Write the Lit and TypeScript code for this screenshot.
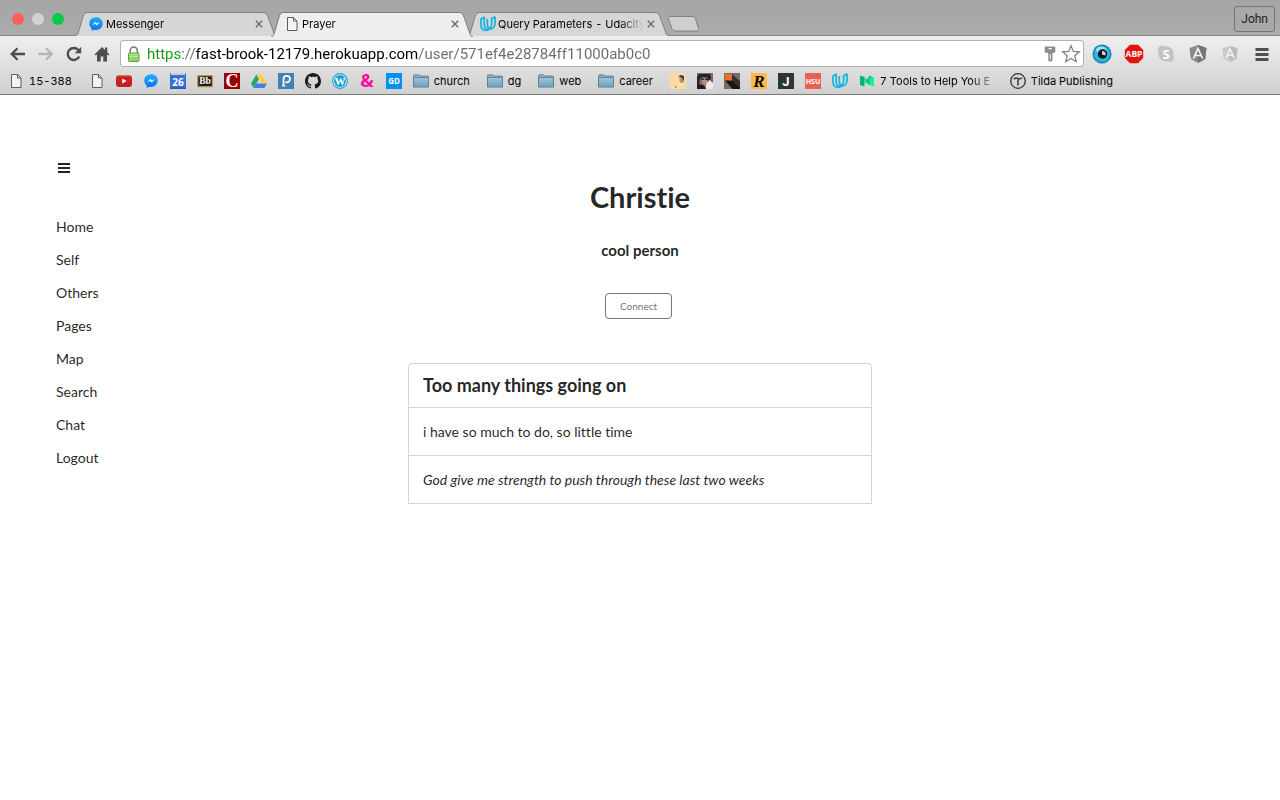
import { LitElement, html, css, svg, nothing } from "lit";
import type { TemplateResult } from "lit";
import { customElement, property, state } from "lit/decorators.js";
import { classMap } from "lit/directives/class-map.js";

const messenger = html`<svg class="glyph" viewBox="0 0 16 16" aria-hidden="true">
  <defs><linearGradient id="mg" x1="0" y1="0" x2="0" y2="1"><stop offset="0" stop-color="#1cb0ff" /><stop offset="1" stop-color="#0a6cff" /></linearGradient></defs>
  <path fill="url(#mg)" d="M8 1.2C4.1 1.2 1.3 4 1.3 7.5c0 2 .9 3.700 2.400 4.900V15l2.300-1.300c.6.2 1.300.2 2 .2 3.900 0 6.700-2.800 6.700-6.400S11.900 1.200 8 1.200z" />
  <path fill="#fff" d="M3.900 9.400 7.300 5.800l1.800 1.800 3.100-1.800-3.400 3.700-1.800-1.800z" />
</svg>`;

const page = html`<svg class="glyph" viewBox="0 0 16 16" aria-hidden="true">
  <path fill="#f4f4f4" stroke="#5c5c5c" d="M3.500 1.500h6l3.500 3.500v9.500H3.500z" />
  <path fill="none" stroke="#5c5c5c" d="M9.500 1.500V5H13" />
</svg>`;

const udacity = html`<svg class="glyph" viewBox="0 0 16 16" aria-hidden="true">
  <g fill="none" stroke="#12b4e0" stroke-width="1.700" stroke-linejoin="round">
    <path d="M4.200 1.300 1 2.900v6.200c0 3.300 2.100 5.300 5 5.300 1.200 0 2.100-.4 2.800-1-2.900-.3-4.600-2-4.600-5z" />
    <path d="M15 1 11.700 2.600V8c0 2-.8 3.600-2.900 5.400C13 13 15 10.500 15 7.500z" />
    <path d="M7.300 3v5.800c0 1.700.6 3 1.900 3.900" />
  </g>
</svg>`;

const youtube = html`<svg class="glyph" viewBox="0 0 16 16" aria-hidden="true">
  <rect y="2.500" width="16" height="11.500" rx="2.400" fill="#c9201f" /><path fill="#e04a48" d="M2 2.800h12v.8H2z" />
  <path fill="#fff" d="M6.200 5.600v5l4.400-2.500z" />
</svg>`;

const calendar = html`<svg class="glyph" viewBox="0 0 16 16" aria-hidden="true">
  <rect width="16" height="16" rx="1" fill="#3b6fd8" /><path fill="#c9cfdb" d="M1 0h14v2H1z" /><path fill="#2857b5" d="M0 14.500h16V16H0z" />
  <text x="8" y="12.500" class="g-sans" font-size="10" fill="#fff">26</text>
</svg>`;

const blackboard = html`<svg class="glyph" viewBox="0 0 16 16" aria-hidden="true">
  <rect x=".7" y="2.700" width="14.600" height="11" fill="#1b1b1b" stroke="#c99a35" stroke-width="1.200" />
  <text x="8" y="11.300" class="g-serif" font-size="9.500" fill="#fff">Bb</text>
</svg>`;

const redC = html`<svg class="glyph" viewBox="0 0 16 16" aria-hidden="true">
  <rect width="16" height="16" fill="#990000" /><text x="8" y="14" class="g-serif" font-size="18" fill="#fff">C</text>
</svg>`;

const drive = html`<svg class="glyph" viewBox="0 0 16 16" aria-hidden="true">
  <path fill="#24a566" d="M5.400 1.500 8 6 2.700 15 0 10.500z" />
  <path fill="#ffcf3f" d="M5.400 1.500h5.200L16 10.500h-5.300z" />
  <path fill="#3f7fee" d="M5.300 10.500H16L13.300 15H2.700z" />
</svg>`;

const pandora = html`<svg class="glyph" viewBox="0 0 16 16" aria-hidden="true">
  <rect width="16" height="16" fill="#4481b2" />
  <path fill="none" stroke="#fff" stroke-width="1.800" d="M5.500 13V6a3.300 3.300 0 0 1 3.300-3.200 3.100 3.100 0 0 1 0 6.500H7.300" />
  <path fill="none" stroke="#fff" d="M4 13h3.500" />
</svg>`;

const github = html`<svg class="glyph" viewBox="0 0 16 16" aria-hidden="true">
  <path fill="#1b1b1b" d="M8 0C3.580 0 0 3.580 0 8c0 3.540 2.290 6.530 5.470 7.590.4.070.55-.17.55-.38 0-.19-.01-.82-.01-1.490-2.010.37-2.530-.49-2.690-.94-.09-.23-.48-.94-.82-1.130-.28-.15-.68-.52-.01-.53.63-.01 1.080.58 1.230.82.72 1.210 1.870.87 2.330.66.070-.52.28-.87.51-1.070-1.780-.2-3.640-.89-3.640-3.950 0-.87.31-1.590.82-2.150-.08-.2-.36-1.020.08-2.120 0 0 .67-.21 2.200.82.64-.18 1.320-.27 2-.27s1.360.09 2 .27c1.530-1.040 2.200-.82 2.200-.82.44 1.100.16 1.920.08 2.120.51.56.82 1.270.82 2.150 0 3.070-1.870 3.750-3.650 3.950.29.25.54.73.54 1.480 0 1.070-.01 1.930-.01 2.200 0 .21.15.46.55.38A8.010 8.010 0 0 0 16 8c0-4.420-3.580-8-8-8z" />
</svg>`;

const wordpress = html`<svg class="glyph" viewBox="0 0 16 16" aria-hidden="true">
  <circle cx="8" cy="8" r="7.400" fill="#e9f6fb" stroke="#1ba1d1" stroke-width="1.100" />
  <circle cx="8" cy="8" r="6" fill="#1ba1d1" />
  <text x="8" y="12" class="g-serif" font-size="11" fill="#fff">W</text>
</svg>`;

const ampersand = html`<svg class="glyph" viewBox="0 0 16 16" aria-hidden="true">
  <text x="8" y="14" class="g-sans" font-size="18" fill="#f6109f">&amp;</text>
</svg>`;

const gd = html`<svg class="glyph" viewBox="0 0 16 16" aria-hidden="true">
  <rect width="16" height="16" fill="#0090f0" /><text x="8" y="10.800" class="g-sans" font-size="8" fill="#fff">GD</text>
</svg>`;

const folder = html`<svg class="glyph" viewBox="0 0 16 16" aria-hidden="true">
  <defs><linearGradient id="fg" x1="0" y1="0" x2="0" y2="1"><stop offset="0" stop-color="#a3c4d8" /><stop offset="1" stop-color="#6e9fbf" /></linearGradient></defs>
  <path fill="#8db2c8" stroke="#56798f" stroke-width=".8" d="M.5 3c0-.8.4-1.200 1.200-1.200h3.600c.7 0 1 .4 1.200 1.200h8c.7 0 1 .3 1 1V13.500H.5z" />
  <path fill="url(#fg)" stroke="#56798f" stroke-width=".8" d="M.5 4.500h15v9.600H.5z" />
</svg>`;

const avatarOne = html`<svg class="glyph" viewBox="0 0 16 16" aria-hidden="true">
  <rect width="16" height="16" fill="#fbdba1" /><path fill="#c98d68" d="M9.500 4h4v5l-2 1.500-2-2z" />
  <path fill="#3c2c48" d="M8.500 3.500c1.500-1.600 4.500-1.500 5.300 0 .6 1.600 0 4-.8 5 0-2-.5-3.500-1.300-4z" />
  <path fill="#e9ece9" d="m8.500 10 2 .6 2.500-.6.800 1.500-3.800.6z" /><path fill="#8b6248" d="m4.500 14 2-1 .5 1-1.500.8z" />
</svg>`;

const avatarTwo = html`<svg class="glyph" viewBox="0 0 16 16" aria-hidden="true">
  <rect width="16" height="16" fill="#776c64" /><path fill="#252326" d="M2 1h11l1 5-3 2-8-3-1 6-2 1V4z" />
  <path fill="#bd8d77" d="M4.500 4.500h6v5L8 12l-3-2z" /><path fill="#302c30" d="M4 5.500h3v1.500H4zM8 5.500h3v1.500H8z" />
  <path fill="#eceaf0" d="m9 11 3.500-4 3.500 3v6H9z" /><path fill="#1c1c22" d="m0 11 6 1 3 4H0z" />
</svg>`;

const block = html`<svg class="glyph" viewBox="0 0 16 16" aria-hidden="true">
  <rect width="16" height="16" fill="#6f7069" /><path fill="#171615" d="M1 7.500 7.500 1 16 8.500V16H8.500z" />
  <path fill="#353331" d="M8 1 16 9v6L8 7.500z" /><path fill="#f26a24" d="M1 1h7v6.500H1z" />
</svg>`;

const letterR = html`<svg class="glyph" viewBox="0 0 16 16" aria-hidden="true">
  <rect width="16" height="16" fill="#fdbb43" /><text x="8" y="13.500" class="g-serif g-italic" font-size="17" fill="#000">R</text>
</svg>`;

const letterJ = html`<svg class="glyph" viewBox="0 0 16 16" aria-hidden="true">
  <rect width="16" height="16" fill="#2b3537" /><text x="8" y="12.500" class="g-j" font-size="13" fill="#fff">J</text>
</svg>`;

const hsu = html`<svg class="glyph" viewBox="0 0 16 16" aria-hidden="true">
  <rect width="16" height="16" fill="#ea5f55" /><text x="8" y="10.500" class="g-sans" font-size="7" fill="#fff">HSU</text>
</svg>`;

const medium = html`<svg class="glyph" viewBox="0 0 16 16" aria-hidden="true">
  <path fill="#00b56b" d="M1 2.500 5.500 4v9.500L1 12z" /><path fill="#11e08a" d="M5.500 4 10.500 12 5.500 9z" />
  <path fill="#00c878" d="m5 3.800 5.500 9L15 5l-4.500-2.500-2.700 4.200z" /><path fill="#19f09a" d="M10.500 5 15 4.300V13.500l-4.500-1.500z" />
</svg>`;

const tilda = html`<svg class="glyph" viewBox="0 0 16 16" aria-hidden="true">
  <circle cx="8" cy="8" r="7.300" fill="none" stroke="#333" stroke-width="1.300" />
  <path fill="none" stroke="#333" stroke-width="1.400" d="M4 6.200c1.200-1.500 2.400-1.500 4-.8s2.800.5 4-.7M8 5.500V12.500" />
</svg>`;

interface Bookmark {
  icon: TemplateResult;
  title: string;
  label?: string;
  fade?: boolean;
}

const bookmarks: Bookmark[] = [
  { icon: page, title: "15-388", label: "15-388" },
  { icon: page, title: "Page" },
  { icon: youtube, title: "YouTube" },
  { icon: messenger, title: "Messenger" },
  { icon: calendar, title: "Calendar" },
  { icon: blackboard, title: "Blackboard" },
  { icon: redC, title: "Courses" },
  { icon: drive, title: "Drive" },
  { icon: pandora, title: "Pandora" },
  { icon: github, title: "GitHub" },
  { icon: wordpress, title: "WordPress" },
  { icon: ampersand, title: "Ampersand" },
  { icon: gd, title: "GD" },
  { icon: folder, title: "church", label: "church" },
  { icon: folder, title: "dg", label: "dg" },
  { icon: folder, title: "web", label: "web" },
  { icon: folder, title: "career", label: "career" },
  { icon: avatarOne, title: "Portrait" },
  { icon: avatarTwo, title: "Portfolio" },
  { icon: block, title: "Blocks" },
  { icon: letterR, title: "R" },
  { icon: letterJ, title: "J" },
  { icon: hsu, title: "HSU" },
  { icon: udacity, title: "Udacity" },
  { icon: medium, title: "7 Tools to Help You", label: "7 Tools to Help You E", fade: true },
  { icon: tilda, title: "Tilda Publishing", label: "Tilda Publishing" },
];

const shield = (fill: string, shade: string) => svg`
  <path fill=${fill} d="m10 1 8.500 3-1.300 11L10 19l-7.200-4L1.500 4z" />
  <path fill=${shade} d="m10 1 8.500 3-1.300 11L10 19z" />
  <path fill="none" stroke="#f4f4f4" stroke-width="1.700" d="M5.500 14.500 10 4.500l4.500 10M7.200 11.500h5.600" />`;

const extensions = [
  {
    title: "Eye",
    art: svg`<circle cx="10" cy="10" r="9.500" fill="#1783a8" /><circle cx="10" cy="10" r="8" fill="#2bb6dc" />
      <ellipse cx="9" cy="6" rx="5" ry="3.500" fill="#8fe3f5" /><circle cx="10.500" cy="10" r="4.700" fill="#101820" />
      <path fill="#d8d8d8" d="M10 7v3.500l3.500 1A3.500 3.500 0 0 0 10 7z" />`,
  },
  {
    title: "Adblock Plus",
    art: svg`<path fill="#e2150d" d="M6 .8h8L19.200 6v8L14 19.200H6L.8 14V6z" /><text x="10" y="13.200" class="g-sans" font-size="8.500" fill="#fff">ABP</text>`,
  },
  {
    title: "Skype",
    art: svg`<path fill="#c3c3c3" d="M6 1.500c1.300 0 2 .3 2.800.8C14 1.500 18 5.500 17.500 10.800c1.800 3-.2 7.200-3.700 7.200-1.200 0-2-.3-2.700-.8C6 18 1.800 14 2.500 8.800.8 5.500 2.600 1.500 6 1.500z" /><text x="10" y="14.500" class="g-sans" font-size="13" fill="#fff">S</text>`,
  },
  { title: "AngularJS", art: shield("#8b8b8b", "#757575") },
  { title: "Batarang", art: svg`<g transform="translate(1 1) scale(.9)">${shield("#cacaca", "#bcbcbc")}</g>` },
  { title: "Menu", art: svg`<path fill="#4d4d4d" d="M3.500 4h13v3h-13zM3.500 9h13v3h-13zM3.500 14h13v3h-13z" />` },
];

const iconStyles = css`
  .glyph { display: block; width: 16px; height: 16px; flex: none; overflow: visible; }
  .g-sans { font-family: "Open Sans", "Noto Sans", sans-serif; font-weight: 700; text-anchor: middle; }
  .g-serif { font-family: "Liberation Serif", serif; font-weight: 700; text-anchor: middle; }
  .g-j { font-family: Roboto, sans-serif; font-weight: 700; text-anchor: middle; }
  .g-italic { font-style: italic; }
`;

@customElement("browser-tab")
class BrowserTab extends LitElement {
  @property() label = "";
  @property({ attribute: false }) icon: unknown = nothing;
  @property({ type: Boolean, reflect: true }) active = false;

  static styles = [
    iconStyles,
    css`
      :host { display: grid; flex: 0 1 202px; height: 24px; margin-right: -6px; }
      :host([active]) { z-index: 1; height: 25px; }
      .shape, .content { grid-area: 1 / 1; min-width: 0; }
      .shape { display: block; width: 100%; height: 100%; }
      .content { display: flex; align-items: center; height: 24px; padding: 0 13px; }
      .title { flex: 1; margin: 0 2px; overflow: hidden; white-space: nowrap; font-size: 11px; line-height: 16px;
        mask-image: linear-gradient(to right, #000 calc(100% - 24px), transparent); }
      .close { display: grid; place-items: center; width: 10px; height: 10px; padding: 0; border: 0; background: none; }
    `,
  ];

  render() {
    return html`
      <svg class="shape" viewBox="0 0 202 25" preserveAspectRatio="none" aria-hidden="true">
        <path fill=${this.active ? "#efefef" : "#d6d6d6"} d="M0 25C3 24 3 22 4 19L8 5C9 2 10 .5 13 .5H188C191 .5 192 2 193 5L198 19C199 22 199 24 202 25z" />
        <path fill="none" stroke="#7d7d7d" d="M0 25C3 24 3 22 4 19L8 5C9 2 10 .5 13 .5H188C191 .5 192 2 193 5L198 19C199 22 199 24 202 25" />
      </svg>
      <div class="content">
        ${this.icon}
        <span class="title">${this.label}</span>
        <button class="close" aria-label="Close tab">
          <svg width="8" height="8" viewBox="0 0 8 8"><path stroke="#6b6b6b" stroke-width="1.400" d="m.8.800 6.400 6.400M7.200.800.800 7.200" /></svg>
        </button>
      </div>
    `;
  }
}

@customElement("browser-chrome")
class BrowserChrome extends LitElement {
  static styles = [
    iconStyles,
    css`
      :host { display: block; font-family: Inter, Roboto, sans-serif; font-variant-numeric: tabular-nums; color: #000; }
      button { padding: 0; border: 0; background: none; font: inherit; color: inherit; }
      .strip { display: flex; align-items: flex-start; height: 36px; box-sizing: border-box; padding-right: 5px; background: linear-gradient(#a6a6a6, #ababab); border-bottom: 1px solid #8a8a8a; }
      .lights { display: flex; gap: 8px; padding: 13px 11px 0 12px; }
      .light { width: 12px; height: 12px; border-radius: 50%; }
      .red { background: #fd5f5a; }
      .grey { background: #d2d2d2; }
      .green { background: #06cb4c; }
      .tabs { display: flex; flex: 1; min-width: 0; padding-top: 12px; }
      .new-tab { display: block; margin: 3px 0 0 4px; }
      .user { height: 26px; margin-top: 6px; padding: 0 6px; border: 1px solid #757575; border-radius: 3px; font-family: Roboto, sans-serif; font-size: 12px; color: #1a1a1a; background: #a9a9a9; }
      .bars { background: linear-gradient(#efefef, #d0d0d0); border-bottom: 1px solid #7b7b7b; }
      .toolbar { display: flex; align-items: center; height: 35px; padding: 0 8px 0 10px; }
      .group { display: flex; gap: 12px; }
      .extension { display: block; width: 20px; height: 20px; }
      .address { display: flex; align-items: center; flex: 1; min-width: 0; height: 27px; box-sizing: border-box; margin: 0 8px 0 10px; padding: 0 4px 0 5px; gap: 5px; border: 1px solid #b0b0b0; border-radius: 3px; background: #fff; }
      .url { flex: 1; min-width: 0; height: 24px; padding: 0; border: 0; outline: 0; font-family: Roboto, sans-serif; font-size: 15px; color: #6a6a6a;
        background: linear-gradient(to right, #149a14 34px, #6a6a6a 34px, #6a6a6a 48px, #000 48px, #000 271px, #6a6a6a 271px) text;
        -webkit-text-fill-color: transparent; }
      .bookmarks { display: flex; align-items: center; gap: 11px; height: 20px; padding: 0 8px 3px; overflow: hidden; }
      .bookmark { display: flex; align-items: center; gap: 5px; flex: none; height: 18px; color: #000; text-decoration: none; font-size: 11px; line-height: 16px; }
      .labelled { margin-right: 6px; }
      .fade { width: 116px; overflow: hidden; white-space: nowrap; mask-image: linear-gradient(to right, #000 90px, transparent 120px); }
      .fading { margin-right: 3px; }
    `,
  ];

  render() {
    return html`
      <div class="strip">
        <div class="lights"><span class="light red"></span><span class="light grey"></span><span class="light green"></span></div>
        <div class="tabs">
          <browser-tab label="Messenger" .icon=${messenger}></browser-tab>
          <browser-tab label="Prayer" .icon=${page} active></browser-tab>
          <browser-tab label="Query Parameters - Udacity" .icon=${udacity}></browser-tab>
          <button class="new-tab" aria-label="New tab">
            <svg width="32" height="18" viewBox="0 0 32 18"><path fill="#cfcfcf" stroke="#808080" d="M3 1.500h22c2 0 3 .8 3.500 2l3 10c.4 1.500 0 2.500-1.500 2.500H8.500c-2 0-3-.8-3.500-2L1.500 4C1 2.500 1.500 1.500 3 1.500z" /></svg>
          </button>
        </div>
        <button class="user">John</button>
      </div>
      <div class="bars">
        <div class="toolbar">
          <div class="group">
            <button aria-label="Back"><svg class="glyph" viewBox="0 0 16 16"><path fill="none" stroke="#4d4d4d" stroke-width="2.300" d="M15 8H2M7.500 2.200 1.700 8l5.800 5.800" /></svg></button>
            <button aria-label="Forward"><svg class="glyph" viewBox="0 0 16 16"><path fill="none" stroke="#b4b4b4" stroke-width="2.300" d="M.5 8H14M8 2.200 13.800 8 8 13.800" /></svg></button>
            <button aria-label="Reload"><svg class="glyph" viewBox="0 0 16 16"><path fill="none" stroke="#4d4d4d" stroke-width="2.400" d="M13.200 10.500A6 6 0 1 1 12.300 4" /><path fill="#4d4d4d" d="M15.200.800V7.300H8.700z" /></svg></button>
            <button aria-label="Home"><svg class="glyph" viewBox="0 0 16 16"><path fill="#4d4d4d" d="M8 1 .5 8.500 1.600 9.600 3 8.300V15.500h3.700V10.500h2.600v5H13V8.300l1.400 1.300 1.100-1.100-2.200-2.200V1.500h-2.200v2.600z" /></svg></button>
          </div>
          <div class="address">
            <svg class="glyph" viewBox="0 0 16 16" aria-hidden="true">
              <path fill="none" stroke="#777" stroke-width="1.500" d="M4.200 8V4.500a3.500 3.500 0 0 1 7.100 0V8" />
              <rect x="2.500" y="7" width="10.500" height="8.500" rx="1" fill="#92d36e" stroke="#5da440" /><path stroke="#b9e8a0" d="M3.500 8.500H12M3.500 10.500H12" />
            </svg>
            <input class="url" type="text" aria-label="Address" .value=${"https://fast-brook-12179.herokuapp.com/user/571ef4e28784ff11000ab0c0"} />
            <svg class="glyph" viewBox="0 0 16 16" aria-hidden="true"><path fill="#8c8c8c" fill-rule="evenodd" d="M3.500.500h9q.8 0 .8.800V6q0 .8-.8.800H10.500V14.500L9.500 15.500H7.200L6.200 14.500V6.800H3.500Q2.700 6.800 2.700 6V1.300Q2.700.500 3.500.500zM6.500 2v1.200h3.200V2zM7.700 8v5.500h1V8z" /></svg>
            <svg class="glyph" viewBox="0 0 16 16" aria-hidden="true"><path fill="#fff" stroke="#7f7f7f" stroke-width="1.200" d="m8-.300 2.300 5.700 6.100.400-4.700 3.900 1.600 6.100L8 12.500l-5.300 3.300 1.600-6.100L-.4 5.800l6.100-.4z" /></svg>
          </div>
          <div class="group">
            ${extensions.map((e) => html`<button aria-label=${e.title}><svg class="extension" viewBox="0 0 20 20">${e.art}</svg></button>`)}
          </div>
        </div>
        <nav class="bookmarks" aria-label="Bookmarks">
          ${bookmarks.map(
            (b) => html`<a class=${classMap({ bookmark: true, labelled: !!b.label && !b.fade, fading: !!b.fade })} href="#" aria-label=${b.title}>
              ${b.icon}${b.label ? html`<span class=${classMap({ fade: !!b.fade })}>${b.label}</span>` : nothing}
            </a>`
          )}
        </nav>
      </div>
    `;
  }
}

@customElement("app-root")
class AppRoot extends LitElement {
  @state() private links = ["Home", "Self", "Others", "Pages", "Map", "Search", "Chat", "Logout"];

  static styles = css`
    :host { display: block; min-height: 100vh; background: #fff; font-family: Lato, sans-serif; font-size: 14px; line-height: 18px; font-variant-ligatures: no-common-ligatures; color: rgba(0, 0, 0, 0.87); }
    .layout { display: grid; grid-template-columns: 1fr minmax(0, 464px) 1fr; }
    .side { padding: 66px 0 0 56px; }
    .menu-toggle { display: block; padding: 0 0 0 2px; border: 0; background: none; }
    .menu-toggle svg { display: block; }
    .links { display: flex; flex-direction: column; align-items: flex-start; gap: 15px; margin: 43px 0 0; padding: 0; list-style: none; }
    .links a { color: inherit; text-decoration: none; }
    .profile { display: flex; flex-direction: column; align-items: center; padding-top: 84px; }
    h1 { margin: 0; font-size: 29px; line-height: 36px; }
    .bio { margin: 26px 0 0; font-size: 15px; line-height: 18px; font-weight: 700; }
    .connect { height: 26px; margin: 34px 3px 44px 0; padding: 0 14px; border: 1px solid #767676; border-radius: 4px; background: #fff; font-family: inherit; font-size: 10px; color: rgba(0, 0, 0, 0.6); }
    .card { align-self: stretch; border: 1px solid #d4d4d5; border-radius: 4px 4px 0 0; }
    .card h3 { margin: 0; padding: 10px 14px; font-size: 18px; line-height: 23px; }
    .card p { margin: 0; padding: 15px 14px 14px; border-top: 1px solid #d4d4d5; }
    .request { font-style: italic; }
  `;

  render() {
    return html`
      <browser-chrome></browser-chrome>
      <div class="layout">
        <nav class="side" aria-label="Main">
          <button class="menu-toggle" aria-label="Toggle menu">
            <svg width="12" height="14" viewBox="0 0 12 14"><path fill="#222" d="M0 2h12v2H0zM0 6h12v2H0zM0 10h12v2H0z" /></svg>
          </button>
          <ul class="links">
            ${this.links.map((l) => html`<li><a href="#">${l}</a></li>`)}
          </ul>
        </nav>
        <main class="profile">
          <h1>Christie</h1>
          <p class="bio">cool person</p>
          <button class="connect">Connect</button>
          <article class="card">
            <h3>Too many things going on</h3>
            <p>i have so much to do, so little time</p>
            <p class="request">God give me strength to push through these last two weeks</p>
          </article>
        </main>
      </div>
    `;
  }
}
